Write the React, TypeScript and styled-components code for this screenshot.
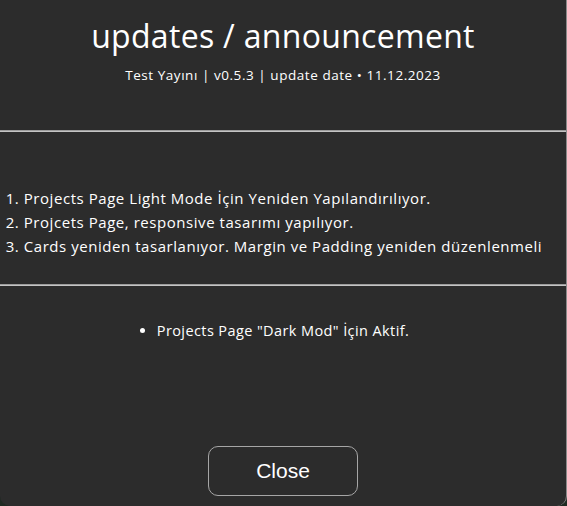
import React from "react";
import styled, { createGlobalStyle } from "styled-components";

const Global = createGlobalStyle`
  html, body { margin: 0; padding: 0; background: #1f2a22; }
  body { font-family: "Open Sans", "DejaVu Sans", sans-serif; }
  * { box-sizing: border-box; }
`;

const Modal = styled.div`
  width: 567px;
  height: 506px;
  background: #2c2c2c;
  color: #ffffff;
  border-right: 1px solid #8a8a8a;
  border-radius: 0 0 10px 10px;
  display: flex;
  flex-direction: column;
  overflow: hidden;
`;

const Header = styled.header`
  display: flex;
  flex-direction: column;
  align-items: center;
  padding-top: 15px;
  height: 130px;
`;

const Title = styled.h1`
  margin: 0;
  font-weight: 400;
  font-size: 32px;
  line-height: 42px;
  letter-spacing: 0.3px;
`;

const Subtitle = styled.p`
  margin: 9px 0 0;
  font-size: 13.5px;
  line-height: 18px;
  letter-spacing: 0.55px;
`;

const Divider = styled.hr`
  margin: 0;
  height: 2px;
  border: none;
  border-top: 1px solid #9c9c9c;
  border-bottom: 1px solid #c4c4c4;
`;

const Section = styled.section<{ $h: number; $pt: number }>`
  height: ${(p) => p.$h}px;
  padding-top: ${(p) => p.$pt}px;
  display: flex;
  flex-direction: column;
  align-items: center;
`;

const Ordered = styled.ol`
  margin: 0;
  padding: 0;
  width: fit-content;
  font-size: 15px;
  line-height: 24px;
  letter-spacing: 0.55px;
`;

const Bullets = styled.ul`
  margin: 0;
  padding: 0;
  width: fit-content;
  font-size: 14.5px;
  line-height: 24px;
  letter-spacing: 0.4px;
`;

const Item = styled.li``;

const Footer = styled.div`
  flex: 1;
  display: flex;
  flex-direction: column;
  align-items: center;
  padding-top: 33px;
`;

const Spacer = styled.div`
  flex: 1;
`;

const CloseButton = styled.button`
  width: 150px;
  height: 50px;
  margin-bottom: 10px;
  background: transparent;
  color: #ffffff;
  border: 1px solid #a6a6a6;
  border-radius: 10px;
  font-family: "Liberation Sans", Arial, sans-serif;
  font-size: 21px;
  cursor: pointer;
`;

export default function App() {
  return (
    <>
      <Global />
      <Modal>
        <Header>
          <Title>updates / announcement</Title>
          <Subtitle>Test Yayını | v0.5.3 | update date • 11.12.2023</Subtitle>
        </Header>
        <Divider />
        <Section $h={152} $pt={54}>
          <Ordered>
            <Item>Projects Page Light Mode İçin Yeniden Yapılandırılıyor.</Item>
            <Item>Projcets Page, responsive tasarımı yapılıyor.</Item>
            <Item>Cards yeniden tasarlanıyor. Margin ve Padding yeniden düzenlenmeli</Item>
          </Ordered>
        </Section>
        <Divider />
        <Footer>
          <Bullets>
            <Item>Projects Page "Dark Mod" İçin Aktif.</Item>
          </Bullets>
          <Spacer />
          <CloseButton>Close</CloseButton>
        </Footer>
      </Modal>
    </>
  );
}
